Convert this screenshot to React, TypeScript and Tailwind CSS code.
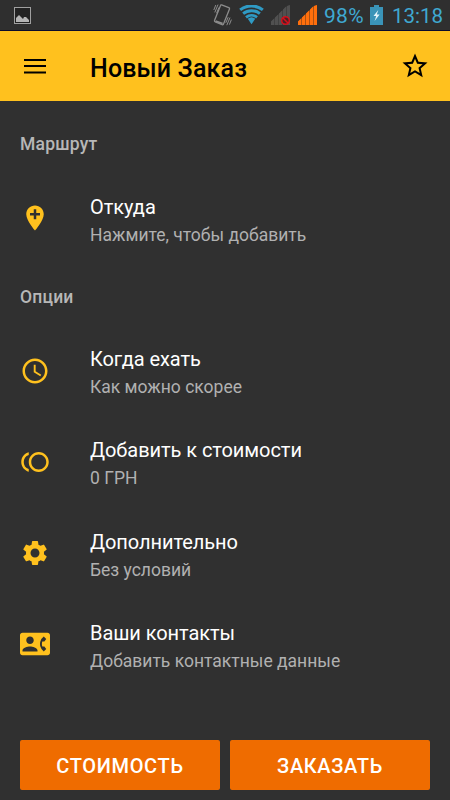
import React from 'react';
import type { IconType } from 'react-icons';
import {
  MdAddLocation,
  MdContactPhone,
  MdSchedule,
  MdSettings,
  MdStarBorder,
  MdToll,
} from 'react-icons/md';

interface OptionRowProps {
  icon: IconType;
  title: string;
  subtitle: string;
}

const SIGNAL_BARS = 'M0 16.5l3.3-3.3V20H0zM4 12.5l3.3-3.3V20H4zM8 8.5l3.3-3.3V20H8zM12 4.5l3.3-3.3V20H12zM16 .9L19 0v20h-3z';

function StatusBar() {
  return (
    <div className="h-[31px] shrink-0 flex items-center bg-[#2f2f2f] border-b border-[#0b0b2c] text-[#3fa9d2]">
      <svg className="ml-[14px] w-[17px] h-[17px]" viewBox="0 0 17 17">
        <rect x="0.5" y="0.5" width="16" height="16" fill="#222" stroke="#a0a0a0" />
        <path d="M2 15v-4l2-2 1-1 2 2 2 2 1-2h2l3 3v2z" fill="#b4b4b4" />
      </svg>
      <svg className="ml-[182px] w-[19px] h-[22px]" viewBox="0 0 19 22" fill="none" stroke="#8c8c8c">
        <path d="M8.6.9l7.2 2.8q1 .4.7 1.4l-6 15q-.4 1-1.4.6L2.2 17.9q-1-.4-.7-1.4l6-15q.3-.9 1.1-.6z" strokeWidth="1.3" />
        <path d="M2.6 17l7 2.7" strokeWidth="1.8" />
        <path d="M2.8 1L.8 6M5 .6L1.8 8.4M6 3.4L3.6 9.2M15.2 13.2l-2.4 5.6M17 13.6l-3.2 7.6M18.4 15.6l-2 5" strokeWidth="1" />
      </svg>
      <svg className="ml-[7px] w-[25px] h-[20px]" viewBox="0 0 26 20">
        <path d="M13 19.5L9.1 14a6 6 0 0 1 7.8 0z" fill="#2f9ac4" />
        <path d="M7.3 12.4a9 9 0 0 1 11.4 0" fill="none" stroke="#2f9ac4" strokeWidth="3" />
        <path d="M4.3 8.5a14 14 0 0 1 17.4 0" fill="none" stroke="#2f9ac4" strokeWidth="3.1" />
        <path d="M1.2 4.7a19 19 0 0 1 23.6 0" fill="none" stroke="#2f9ac4" strokeWidth="3.2" />
      </svg>
      <svg className="ml-[7px] w-[20px] h-[21px]" viewBox="0 0 20 21">
        <path d="M0 16.5L16 .9 19 0v20H0z" fill="#3a3a3a" />
        <path d={SIGNAL_BARS} fill="#505050" />
        <circle cx="14.5" cy="15.5" r="3.8" fill="#4a2024" stroke="#d5101c" strokeWidth="1.5" />
        <path d="M12 13l5 5" stroke="#d5101c" strokeWidth="1.5" />
      </svg>
      <svg className="ml-[7px] w-[20px] h-[20px]" viewBox="0 0 20 20">
        <path d="M0 16.5L16 .9 19 0v20H0z" fill="#8a4516" />
        <path d={SIGNAL_BARS} fill="#ff6f0c" />
      </svg>
      <span className="ml-[6px] w-[42px] pt-[2px] text-[21px] leading-[29px] tracking-[0.3px] whitespace-nowrap">98%</span>
      <svg className="ml-[4px] w-[13px] h-[20px]" viewBox="0 0 13 20">
        <path d="M4 0h5v2h4v18H0V2h4z" fill="#3a94b8" />
        <path d="M8.3 5L3.5 11h2.7L4.6 16l5-6.5H6.8z" fill="#e4f4fa" />
      </svg>
      <span className="ml-[9px] pt-[2px] text-[20.5px] leading-[29px] whitespace-nowrap">13:18</span>
    </div>
  );
}

function SectionTitle({ children }: { children: React.ReactNode }) {
  return (
    <h2 className="h-[61.4px] pt-[23px] pl-5 text-[17.5px] leading-[20px] tracking-[0.2px] font-medium text-[#b7b7b7]">
      {children}
    </h2>
  );
}

function OptionRow({ icon: Icon, title, subtitle }: OptionRowProps) {
  return (
    <div className="h-[91.25px] pl-5 flex items-center gap-10">
      <Icon className="w-[30px] h-[30px] shrink-0 text-[#ffc11e]" />
      <div className="pt-[5px] whitespace-nowrap">
        <div className="text-[20px] leading-[28px] tracking-[-0.06px] text-white">{title}</div>
        <div className="text-[17.5px] leading-[28px] text-[#b1b1b1]">{subtitle}</div>
      </div>
    </div>
  );
}

export default function App() {
  return (
    <div className="w-[450px] h-[800px] flex flex-col overflow-hidden bg-[#303030] font-['Roboto',sans-serif]">
      <StatusBar />
      <header className="h-[70px] shrink-0 px-5 flex items-center bg-[#ffc11e] text-black">
        <svg className="w-[30px] h-[30px]" viewBox="0 0 30 30" fill="currentColor">
          <path d="M4 8h22v2H4zM4 14h22v2H4zM4 20.6h22v2H4z" />
        </svg>
        <h1 className="ml-10 pt-[5px] flex-1 text-[25px] leading-[30px] tracking-[0.15px] font-medium">Новый Заказ</h1>
        <MdStarBorder className="w-[30px] h-[30px]" />
      </header>

      <main className="flex-1 pt-[10px]">
        <SectionTitle>Маршрут</SectionTitle>
        <OptionRow icon={MdAddLocation} title="Откуда" subtitle="Нажмите, чтобы добавить" />
        <SectionTitle>Опции</SectionTitle>
        <OptionRow icon={MdSchedule} title="Когда ехать" subtitle="Как можно скорее" />
        <OptionRow icon={MdToll} title="Добавить к стоимости" subtitle="0 ГРН" />
        <OptionRow icon={MdSettings} title="Дополнительно" subtitle="Без условий" />
        <OptionRow icon={MdContactPhone} title="Ваши контакты" subtitle="Добавить контактные данные" />
      </main>

      <footer className="px-5 pb-[10px] flex gap-[10px] text-[20px] tracking-[0.65px] font-medium text-white">
        <button className="flex-1 h-[50px] pt-px rounded-[2px] bg-[#ef6c00]">СТОИМОСТЬ</button>
        <button className="flex-1 h-[50px] pt-px rounded-[2px] bg-[#ef6c00]">ЗАКАЗАТЬ</button>
      </footer>
    </div>
  );
}
